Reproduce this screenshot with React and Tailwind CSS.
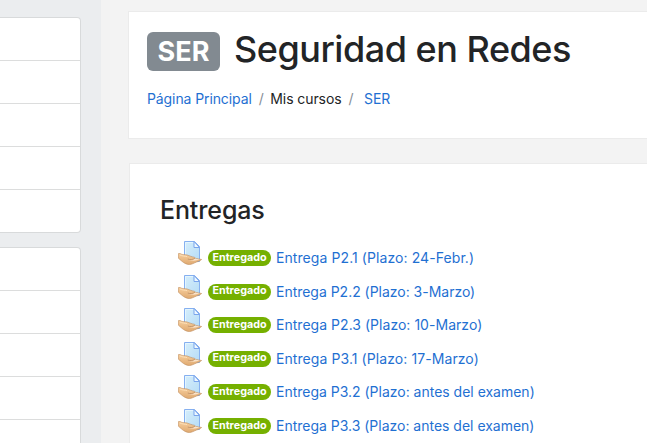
import React from "react";

function AssignIcon() {
  return (
    <svg className="block h-6 w-6 shrink-0" viewBox="0 0 24 24" fill="none">
      <defs>
        <linearGradient id="paper" x1="0" y1="0" x2="1" y2="1">
          <stop offset="0" stopColor="#d6eefb" />
          <stop offset="1" stopColor="#b5dcf6" />
        </linearGradient>
        <linearGradient id="skin" x1="0" y1="0" x2="0" y2="1">
          <stop offset="0" stopColor="#f7cf9e" />
          <stop offset="1" stopColor="#dfa970" />
        </linearGradient>
      </defs>
      <path d="M6.5 .5h10l5 5v15h-15z" fill="url(#paper)" stroke="#86b0f0" />
      <path d="M7.5 19V1.5h8" stroke="#e8f7ff" strokeWidth=".8" />
      <path d="M16 .5v6h5.5z" fill="#edf8ff" stroke="#7aa5ec" />
      <path
        d="M.4 12.6 2 12.5c2 1.1 3.4 1.2 5.3 1.2 2.4.1 4.9 1.7 7.4 2.2 1.3.2 2.6.5 2.2 1.3 2.4.6 4.6.8 6.7 1.3-1.6 1.5-3.5 1.9-5.2 2.6-2.3.9-4.5 2.3-7.2 2.5-3.1-.3-5.4-1.7-7.6-3.6L.4 17.2z"
        fill="url(#skin)"
        stroke="#bf8c5a"
        strokeWidth=".6"
      />
      <path d="M2 14c2.3 1.2 4.9 1 7 1.6" stroke="#fde0b9" />
      <path d="M10 18.2c2.3 1.2 5 .8 7.2-.7l4.8 1.1c-3 .4-4.8 1.2-7.3 1-1.8 0-3.4-.4-4.7-1.4z" fill="#fae3ca" />
      <path d="M9.8 18c2.2 1 4.8.8 7-.6" stroke="#a87850" strokeWidth=".6" />
    </svg>
  );
}

const items = [
  { label: "Entrega P2.1 (Plazo: 24-Febr.)", tracking: "tracking-[0.08px]" },
  { label: "Entrega P2.2 (Plazo: 3-Marzo)", tracking: "tracking-[-0.02px]" },
  { label: "Entrega P2.3 (Plazo: 10-Marzo)", tracking: "tracking-[0.03px]" },
  { label: "Entrega P3.1 (Plazo: 17-Marzo)", tracking: "tracking-[0.08px]" },
  { label: "Entrega P3.2 (Plazo: antes del examen)", tracking: "tracking-[-0.01px]" },
  { label: "Entrega P3.3 (Plazo: antes del examen)", tracking: "tracking-[-0.01px]" },
];

function NavGroup() {
  return (
    <div className="h-[216px] w-[81px] shrink-0 divide-y divide-[#dcdddd] overflow-hidden rounded-r border-y border-r border-[#d8dadb] bg-white">
      {[0, 1, 2, 3, 4].map((n) => (
        <div key={n} className={n === 4 ? "h-[42px]" : "h-[43px]"} />
      ))}
    </div>
  );
}

export default function App() {
  return (
    <div className="flex h-[443px] w-[647px] overflow-hidden bg-[#f3f3f3] font-['Inter',sans-serif] text-sm text-[#222426]">
      <aside className="flex w-[101px] shrink-0 flex-col gap-[14px] bg-[#ebedef] pt-[17px]">
        <NavGroup />
        <NavGroup />
      </aside>
      <main className="min-w-0 flex-1 pt-[11px]">
        <header className="ml-[27px] h-[128px] border-y border-l border-[#ebebeb] bg-white pl-[18px] pt-5">
          <div className="flex h-[39px] items-center">
            <span className="flex h-[39px] w-[73px] items-center justify-center rounded-md bg-[#828a91] text-[27px] font-bold leading-none text-white">
              SER
            </span>
            <h1 className="ml-[14px] -mt-[5px] whitespace-nowrap text-[36px] font-medium leading-none tracking-[-0.48px]">
              Seguridad en Redes
            </h1>
          </div>
          <nav className="mt-[18px] flex whitespace-nowrap leading-5">
            <a className="tracking-[-0.1px] text-[#1f70d2]">Página Principal</a>
            <span className="ml-[7px] text-[#868e96]">/</span>
            <span className="ml-[6.5px] tracking-[-0.08px]">Mis cursos</span>
            <span className="ml-[7px] text-[#868e96]">/</span>
            <a className="ml-[10.5px] tracking-[-0.1px] text-[#1f70d2]">SER</a>
          </nav>
        </header>
        <section className="ml-7 mt-6 h-[320px] border-l border-t border-[#ebebeb] bg-white pl-[30px] pt-[30px]">
          <h2 className="text-[25px] font-medium leading-8 tracking-[-0.12px]">Entregas</h2>
          <ul className="ml-[18px] mt-[15px]">
            {items.map(({ label, tracking }) => (
              <li key={label} className="flex h-[33.6px] items-start whitespace-nowrap">
                <AssignIcon />
                <span className="ml-[6px] mt-[9px] flex h-4 w-[63px] items-center justify-center rounded-full bg-[#75b000] text-[10.75px] font-bold leading-none text-white">
                  Entregado
                </span>
                <a className={`ml-[5px] mt-[7px] leading-5 text-[#1f70d2] ${tracking}`}>{label}</a>
              </li>
            ))}
            <li>
              <AssignIcon />
            </li>
          </ul>
        </section>
      </main>
    </div>
  );
}
